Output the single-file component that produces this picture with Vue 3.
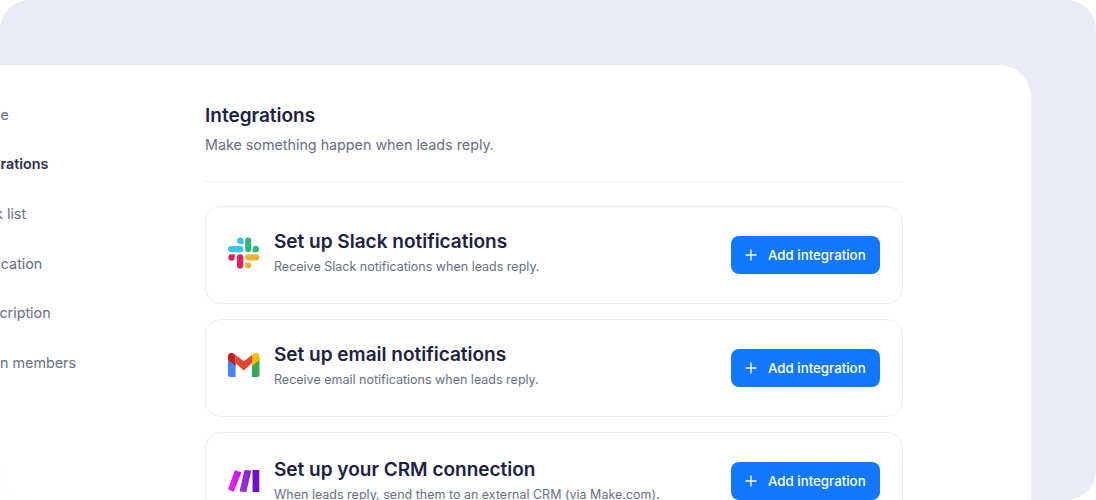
<script setup>
const navItems = [
  { label: 'Profile' },
  { label: 'Integrations', active: true },
  { label: 'Block list' },
  { label: 'Verification' },
  { label: 'Subscription' },
  { label: 'Admin members' }
]

const integrations = [
  { id: 'slack', title: 'Set up Slack notifications', text: 'Receive Slack notifications when leads reply.' },
  { id: 'gmail', title: 'Set up email notifications', text: 'Receive email notifications when leads reply.' },
  { id: 'make', title: 'Set up your CRM connection', text: 'When leads reply, send them to an external CRM (via Make.com).' }
]
</script>

<template>
  <div class="frame">
    <div class="panel">
      <nav class="sidebar">
        <a v-for="item in navItems" :key="item.label" class="nav-item" :class="{ 'nav-item--active': item.active }">{{ item.label }}</a>
      </nav>
      <main class="content">
        <h1 class="title">Integrations</h1>
        <p class="subtitle">Make something happen when leads reply.</p>
        <div class="list">
          <section v-for="card in integrations" :key="card.id" class="card">
            <div class="card-lead" :class="{ 'card-lead--raised': card.id !== 'make' }">
              <svg v-if="card.id === 'slack'" class="logo" viewBox="0 0 32 32">
                <g fill="#36c5f0">
                  <rect x="0" y="9" width="15.500" height="6.200" rx="3.100" />
                  <path d="M12.300 0.500a3.200 3.200 0 0 1 3.200 3.200v3.200h-3.200a3.200 3.200 0 0 1 0-6.400z" />
                </g>
                <g fill="#2eb67d">
                  <rect x="17.200" y="0.500" width="6" height="14.700" rx="3" />
                  <path d="M31 12a3.200 3.200 0 0 1-3.200 3.200h-3.200v-3.200a3.200 3.200 0 0 1 6.400 0z" />
                </g>
                <g fill="#ecb22e">
                  <rect x="17.200" y="17.200" width="14" height="6.200" rx="3.100" />
                  <path d="M20.200 31.500a3 3 0 0 1-3-3v-3h3a3 3 0 0 1 0 6z" />
                </g>
                <g fill="#e01e5a">
                  <rect x="9" y="17.200" width="6.300" height="14.300" rx="3.100" />
                  <path d="M0.300 20.400a3.200 3.200 0 0 1 3.200-3.200h3.200v3.200a3.200 3.200 0 0 1-6.400 0z" />
                </g>
              </svg>
              <svg v-else-if="card.id === 'gmail'" class="logo logo--low" viewBox="0 0 32 32">
                <path fill="#4285f4" d="M0 9v17a2 2 0 0 0 2 2H7.500V14z" />
                <path fill="#34a853" d="M31.500 9v17a2 2 0 0 1-2 2H24V14z" />
                <path fill="#ea4335" d="M7.500 14V6l8.300 6.200L24 6v8l-8.200 7.500z" />
                <path fill="#c5221f" d="M0 7.500v3.500l7.500 6V6L5.500 4.500A3.400 3.400 0 0 0 0 7.500z" />
                <path fill="#fbbc04" d="M31.500 7.500v3.500l-7.500 6V6l2-1.500A3.400 3.400 0 0 1 31.500 7.500z" />
              </svg>
              <svg v-else class="logo" viewBox="0 0 32 32">
                <defs>
                  <linearGradient id="mk1" x1="0" y1="0" x2="1" y2="0">
                    <stop offset="0" stop-color="#f024f6" />
                    <stop offset="1" stop-color="#c416f0" />
                  </linearGradient>
                  <linearGradient id="mk2" x1="0" y1="0" x2="1" y2="0">
                    <stop offset="0" stop-color="#a52ee0" />
                    <stop offset="1" stop-color="#8a20d6" />
                  </linearGradient>
                </defs>
                <path fill="url(#mk1)" d="M7 5l6.500 2.500L5.500 27 0 24.300z" />
                <path fill="url(#mk2)" d="M16.500 5l6.800 0.500L18.300 27l-6.800-0.500z" />
                <rect x="24.500" y="5" width="6.800" height="22" fill="#6f10c8" />
              </svg>
              <div class="card-body">
                <h2 class="card-title">{{ card.title }}</h2>
                <p class="card-text">{{ card.text }}</p>
              </div>
            </div>
            <button class="add-btn">
              <svg class="plus" viewBox="0 0 12 12"><path d="M6 1v10M1 6h10" stroke="#fff" stroke-width="1.300" stroke-linecap="round" fill="none" /></svg>
              <span>Add integration</span>
            </button>
          </section>
        </div>
      </main>
    </div>
  </div>
</template>

<style>
html, body { margin: 0; background: #fff; overflow: hidden; }
</style>

<style scoped>
.frame {
  width: 1096px;
  height: 500px;
  box-sizing: border-box;
  padding-top: 65px;
  background: #e9ebf7;
  border-radius: 30px;
  overflow: hidden;
  font-family: Inter, "Liberation Sans", sans-serif;
}
.panel {
  width: 1031px;
  height: 435px;
  display: flex;
  background: #fff;
  border-radius: 0 32px 0 0;
  overflow: hidden;
}
.sidebar {
  flex: none;
  width: 239.500px;
  box-sizing: border-box;
  margin-left: -34.500px;
  padding: 39.500px 0 0;
  display: flex;
  flex-direction: column;
  gap: 30px;
}
.nav-item {
  font-size: 14.300px;
  line-height: 19.700px;
  color: #667085;
  white-space: nowrap;
}
.nav-item--active {
  color: #2a2f4a;
  font-weight: 600;
}
.content {
  flex: none;
  width: 698px;
}
.title {
  margin: 39px 0 0;
  font-size: 19px;
  line-height: 24px;
  font-weight: 600;
  color: #1d2143;
}
.subtitle {
  margin: 7px 0 0;
  font-size: 14.300px;
  line-height: 20px;
  color: #667085;
  padding-bottom: 26px;
  border-bottom: 1px solid #f0f1f4;
}
.list {
  margin-top: 24px;
  display: flex;
  flex-direction: column;
  gap: 15.500px;
}
.card {
  flex: none;
  height: 97.500px;
  box-sizing: border-box;
  display: flex;
  align-items: center;
  padding: 0 22px;
  border: 1px solid #eceef2;
  border-radius: 16px;
}
.card-lead {
  flex: 1;
  display: flex;
  align-items: center;
}
.card-lead--raised {
  margin-bottom: 4px;
}
.logo {
  flex: none;
  width: 32px;
  height: 32px;
}
.logo--low {
  transform: translateY(-1px);
}
.card-body {
  flex: 1;
  margin-left: 14px;
}
.card-title {
  margin: 0;
  font-size: 19px;
  line-height: 24px;
  font-weight: 600;
  color: #1d2143;
}
.card-text {
  margin: 4px 0 0;
  font-size: 12.500px;
  line-height: 17px;
  color: #667085;
}
.add-btn {
  flex: none;
  width: 149px;
  height: 38px;
  display: flex;
  align-items: center;
  gap: 11px;
  padding: 0 14px;
  border: none;
  border-radius: 8px;
  background: #1279ff;
  color: #fff;
  font-family: inherit;
  font-size: 13.300px;
  font-weight: 500;
}
.plus {
  flex: none;
  width: 12px;
  height: 12px;
}
</style>
